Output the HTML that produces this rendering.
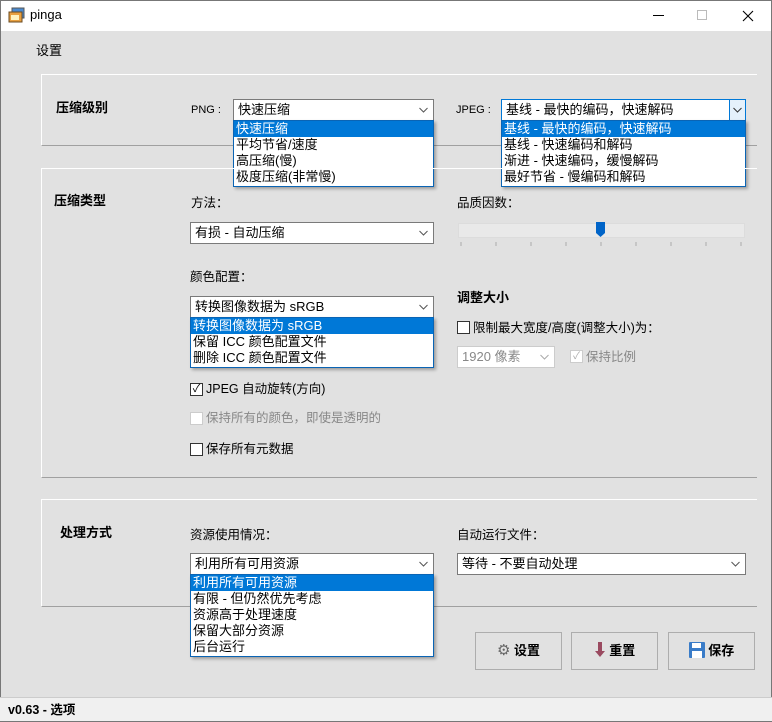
<!DOCTYPE html>
<html><head><meta charset="utf-8"><style>
*{margin:0;padding:0;box-sizing:border-box}
body{width:772px;height:722px;background:#e1e1e1;font-family:"Liberation Sans","Noto Sans CJK SC",sans-serif;font-size:12.5px;color:#000;position:relative;overflow:hidden}
.a{position:absolute;white-space:nowrap}
.t{line-height:16px}
.b{font-weight:bold;font-size:13px}
.panel{position:absolute;border-top:1px solid #fff;border-left:1px solid #fff;border-bottom:1px solid #a0a0a0}
.combo{position:absolute;background:#fff;border:1px solid #7a7a7a;height:22px;line-height:20px;padding-left:4px;font-size:13px}
.combo .ar{position:absolute;right:5px;top:7px}
.list{position:absolute;background:#fff;border:1px solid #0a64b4;box-shadow:2px 2px 3px rgba(0,0,0,.3);font-size:13px}
.list div{height:16px;line-height:16px;padding-left:2px}
.list .s{background:#0078d7;color:#fff}
.cb{position:absolute;width:13px;height:13px;border:1px solid #333;background:#fff}
.btn{position:absolute;border:1px solid #adadad;background:#e1e1e1;height:38px;line-height:36px;text-align:center;font-weight:bold;font-size:13px}
</style></head><body>
<div class="a" style="left:0;top:0;width:772px;height:31px;background:#fff;border-top:1px solid #777"></div>
<div class="a" style="left:0;top:0;width:1px;height:722px;background:#777"></div>
<div class="a" style="left:771px;top:0;width:1px;height:722px;background:#777"></div>
<svg class="a" style="left:8px;top:7px" width="17" height="17"><rect x="4" y="1" width="12" height="10" fill="#4a8ad0" stroke="#555"/><rect x="1" y="5" width="13" height="10" fill="#e8a040" stroke="#6a4a20"/><rect x="3" y="8" width="8" height="5" fill="#fff3c0"/></svg>
<div class="a t" style="left:30px;top:7px;font-size:13px">pinga</div>
<div class="a" style="left:653px;top:15px;width:11px;height:1px;background:#000"></div>
<div class="a" style="left:697px;top:10px;width:10px;height:10px;border:1px solid #bbb"></div>
<svg class="a" style="left:742px;top:10px" width="12" height="12"><path d="M1 1L11 11M11 1L1 11" stroke="#000" stroke-width="1.1"/></svg>

<div class="a t" style="left:36px;top:43px;font-size:13px">设置</div>

<div class="panel" style="left:41px;top:74px;width:716px;height:72px"></div>
<div class="a t b" style="left:56px;top:100px">压缩级别</div>
<div class="a t" style="left:191px;top:102px;font-size:11px">PNG :</div>
<div class="combo" style="left:233px;top:99px;width:201px">快速压缩<svg class="ar" width="9" height="6"><path d="M0.5 1L4.5 5L8.5 1" fill="none" stroke="#555"/></svg></div>
<div class="list" style="left:233px;top:120px;width:201px;height:67px"><div class="s">快速压缩</div><div>平均节省/速度</div><div>高压缩(慢)</div><div>极度压缩(非常慢)</div></div>
<div class="a t" style="left:456px;top:102px;font-size:11px">JPEG :</div>
<div class="combo" style="left:501px;top:99px;width:245px;border-color:#0078d7">基线 - 最快的编码，快速解码<span style="position:absolute;right:0;top:0;width:16px;height:20px;background:#e5f1fb;border-left:1px solid #0078d7"><svg style="position:absolute;left:3px;top:7px" width="9" height="6"><path d="M0.5 1L4.5 5L8.5 1" fill="none" stroke="#333"/></svg></span></div>
<div class="list" style="left:501px;top:120px;width:245px;height:67px"><div class="s">基线 - 最快的编码，快速解码</div><div>基线 - 快速编码和解码</div><div>渐进 - 快速编码，缓慢解码</div><div>最好节省 - 慢编码和解码</div></div>

<div class="panel" style="left:41px;top:168px;width:716px;height:310px"></div>
<div class="a t b" style="left:54px;top:193px">压缩类型</div>
<div class="a t" style="left:191px;top:195px">方法：</div>
<div class="combo" style="left:190px;top:222px;width:244px">有损 - 自动压缩<svg class="ar" width="9" height="6"><path d="M0.5 1L4.5 5L8.5 1" fill="none" stroke="#555"/></svg></div>
<div class="a t" style="left:457px;top:195px">品质因数：</div>
<div class="a" style="left:458px;top:223px;width:287px;height:15px;background:#e9e9e9;border:1px solid #dcdcdc"></div>
<svg class="a" style="left:596px;top:222px" width="10" height="16"><path d="M0 0H9V11L4.5 15L0 11Z" fill="#0064c8"/></svg>
<svg class="a" style="left:458px;top:242px" width="290" height="6"><g stroke="#aaa"><path d="M3 0v4M38 0v4M73 0v4M108 0v4M143 0v4M178 0v4M213 0v4M248 0v4M283 0v4"/></g></svg>
<div class="a t" style="left:190px;top:269px">颜色配置：</div>
<div class="combo" style="left:190px;top:296px;width:244px">转换图像数据为 sRGB<svg class="ar" width="9" height="6"><path d="M0.5 1L4.5 5L8.5 1" fill="none" stroke="#555"/></svg></div>
<div class="list" style="left:190px;top:317px;width:244px;height:51px"><div class="s">转换图像数据为 sRGB</div><div>保留 ICC 颜色配置文件</div><div>删除 ICC 颜色配置文件</div></div>
<div class="a t b" style="left:457px;top:290px">调整大小</div>
<div class="cb" style="left:457px;top:321px"></div>
<div class="a t" style="left:473px;top:320px">限制最大宽度/高度(调整大小)为：</div>
<div class="combo" style="left:457px;top:346px;width:98px;border-color:#ccc;color:#888">1920 像素<svg class="ar" width="9" height="6"><path d="M0.5 1L4.5 5L8.5 1" fill="none" stroke="#aaa"/></svg></div>
<div class="cb" style="left:570px;top:350px;border-color:#ccc;color:#aaa;font-size:10px;line-height:11px;text-align:center">✓</div>
<div class="a t" style="left:586px;top:349px;color:#888">保持比例</div>
<div class="cb" style="left:190px;top:383px;font-size:11px;line-height:11px;text-align:center">✓</div>
<div class="a t" style="left:206px;top:381px">JPEG 自动旋转(方向)</div>
<div class="cb" style="left:190px;top:412px;border-color:#ccc"></div>
<div class="a t" style="left:206px;top:410px;color:#888">保持所有的颜色，即使是透明的</div>
<div class="cb" style="left:190px;top:443px"></div>
<div class="a t" style="left:206px;top:441px">保存所有元数据</div>

<div class="panel" style="left:41px;top:499px;width:716px;height:108px"></div>
<div class="a t b" style="left:60px;top:525px">处理方式</div>
<div class="a t" style="left:190px;top:527px">资源使用情况：</div>
<div class="combo" style="left:190px;top:553px;width:244px">利用所有可用资源<svg class="ar" width="9" height="6"><path d="M0.5 1L4.5 5L8.5 1" fill="none" stroke="#555"/></svg></div>
<div class="list" style="left:190px;top:574px;width:244px;height:83px"><div class="s">利用所有可用资源</div><div>有限 - 但仍然优先考虑</div><div>资源高于处理速度</div><div>保留大部分资源</div><div>后台运行</div></div>
<div class="a t" style="left:457px;top:527px">自动运行文件：</div>
<div class="combo" style="left:457px;top:553px;width:289px">等待 - 不要自动处理<svg class="ar" width="9" height="6"><path d="M0.5 1L4.5 5L8.5 1" fill="none" stroke="#555"/></svg></div>

<div class="btn" style="left:475px;top:632px;width:87px"><span style="color:#666;font-weight:normal;font-size:15px">⚙</span> 设置</div>
<div class="btn" style="left:571px;top:632px;width:87px"><svg width="12" height="16" style="vertical-align:-3px"><path d="M4 0H8V9H11L6 15L1 9H4Z" fill="#9a4a60"/></svg> 重置</div>
<div class="btn" style="left:668px;top:632px;width:87px"><svg width="16" height="16" style="vertical-align:-3px"><rect x="0" y="0" width="16" height="16" rx="1" fill="#3a7cc8"/><rect x="3" y="1" width="9" height="5" fill="#fff"/><rect x="3" y="9" width="10" height="7" fill="#fff"/></svg> 保存</div>

<div class="a" style="left:0;top:697px;width:772px;height:25px;background:#f0f0f0;border-top:1px solid #ccc;border-bottom:1px solid #777"></div>
<div class="a t b" style="left:8px;top:702px;font-size:12.5px">v0.63 - 选项</div>
</body></html>
